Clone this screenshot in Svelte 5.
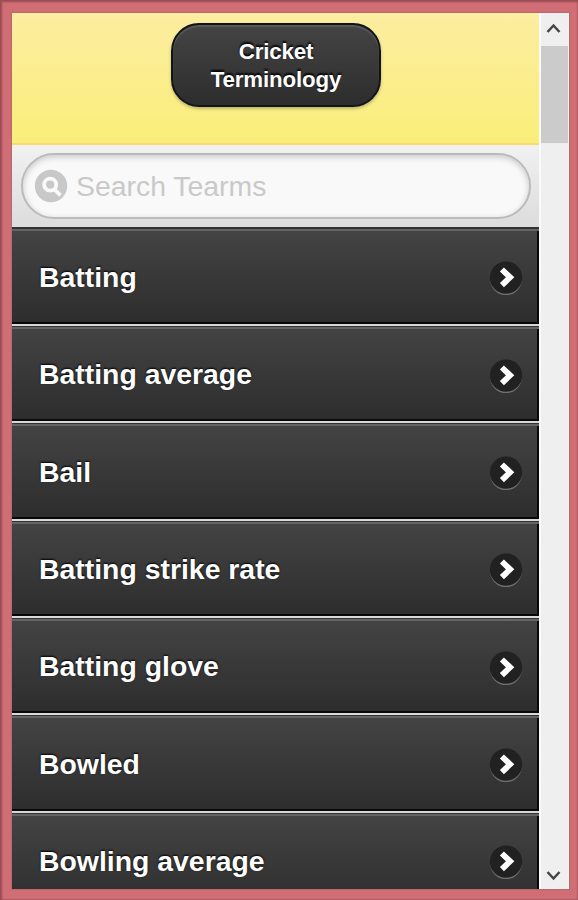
<script>
  const terms = ['Batting', 'Batting average', 'Bail', 'Batting strike rate', 'Batting glove', 'Bowled', 'Bowling average'];
</script>

<div class="frame">
  <div class="page">
    <main>
      <header><button>Cricket<br />Terminology</button></header>
      <div class="search">
        <label>
          <svg width="34" height="34" viewBox="0 0 34 34" fill="none">
            <circle cx="17" cy="17" r="16.2" fill="#c8c8c8" />
            <circle cx="16.2" cy="15.7" r="6" stroke="#fafafa" stroke-width="3.8" />
            <path d="M20 20L26.5 26.3" stroke="#fafafa" stroke-width="3.8" />
          </svg>
          <input type="text" placeholder="Search Tearms" />
        </label>
      </div>
      <ul>
        {#each terms as term}
          <li>
            <span>{term}</span>
            <svg width="36" height="36" viewBox="0 0 36 36" fill="none">
              <circle cx="18" cy="19.1" r="16" fill="#707070" />
              <circle cx="18" cy="17.6" r="16.2" fill="#212121" />
              <path d="M13.9 9.5L22.1 17.3L13.9 25.1" stroke="#fff" stroke-width="5.8" />
            </svg>
          </li>
        {/each}
      </ul>
    </main>
    <aside>
      <svg class="up" width="30" height="32" viewBox="0 0 30 32" fill="none"><path d="M8.5 19L14.5 12.5L20.5 19" stroke="#454545" stroke-width="2.5" /></svg>
      <div class="thumb"></div>
      <svg class="down" width="30" height="30" viewBox="0 0 30 30" fill="none"><path d="M8.5 13L14.5 19.5L20.5 13" stroke="#454545" stroke-width="2.5" /></svg>
    </aside>
  </div>
</div>

<style>
  :global(body) { margin: 0; }
  .frame {
    box-sizing: border-box;
    width: 578px;
    height: 900px;
    padding: 13px 9px 11px 12px;
    background: #d16d75;
    box-shadow: inset 1px 1px 2px 1px #984c53, inset -1px -1px 1px #bd626a;
    font-family: "Liberation Sans", Arial, sans-serif;
  }
  .page { display: flex; height: 876px; overflow: hidden; box-shadow: 0 0 1px 1px #b96a6e; }
  main { width: 527px; overflow: hidden; background: #e5e5e5; }
  header {
    box-sizing: border-box;
    height: 132px;
    padding-top: 10px;
    background: linear-gradient(#fceda1, #faee79);
    border-bottom: 2px solid #f8db70;
  }
  button {
    display: block;
    box-sizing: border-box;
    width: 210px;
    height: 84px;
    margin-left: 159px;
    padding: 2px 0 0;
    border: 2px solid #111419;
    border-radius: 28px;
    background: linear-gradient(#444, #2d2d2d);
    box-shadow: inset 0 2px 1px #5b5b5b, 0 2px 3px #807b5280;
    color: #fff;
    font: bold 22.3px/28px "Liberation Sans", Arial, sans-serif;
    letter-spacing: -0.15px;
    text-shadow: 0 -2px 2px #000;
  }
  .search {
    box-sizing: border-box;
    height: 82px;
    padding: 8px 8px 8px 9px;
    background: linear-gradient(#f1f1f1, #dcdcdc);
  }
  label {
    display: flex;
    align-items: center;
    box-sizing: border-box;
    height: 66px;
    padding-left: 11px;
    border: 2px solid #bababa;
    border-radius: 34px;
    background: #f9f9f9;
    box-shadow: inset 0 2px 6px #0003;
  }
  input {
    width: 400px;
    padding: 0;
    margin-left: 8px;
    border: 0;
    outline: 0;
    background: transparent;
    font: 28.4px "Liberation Sans", Arial, sans-serif;
  }
  input::placeholder { color: #c9c9c9; opacity: 1; }
  ul { margin: 0; padding: 1.7px 0 0; list-style: none; background: #333; }
  li {
    display: flex;
    align-items: center;
    justify-content: space-between;
    box-sizing: border-box;
    height: 97.35px;
    padding: 4px 15px 0 27px;
    background: linear-gradient(#444, #2d2d2d);
    border-bottom: 2px solid #d8d8d8;
    box-shadow: inset 0 1px 0 #333, inset 0 3px 0 #646464, inset -2px -2px 0 #080808;
    color: #fff;
    font-size: 28.4px;
    font-weight: bold;
    text-shadow: 0 -1px 2px #000;
  }
  li:first-child { box-shadow: inset 0 2px 0 #646464, inset -2px -2px 0 #080808; }
  li span { margin-top: -2px; }
  aside {
    display: flex;
    flex-direction: column;
    box-sizing: border-box;
    width: 30px;
    background: #efefef;
    border-left: 2px solid #fafafa;
    border-right: 1px solid #f5f5f5;
  }
  aside svg { flex: none; margin-left: -2px; }
  .up { margin-bottom: 1px; }
  .thumb { height: 97px; background: #cbcbcb; }
  .down { margin-top: auto; }
</style>
